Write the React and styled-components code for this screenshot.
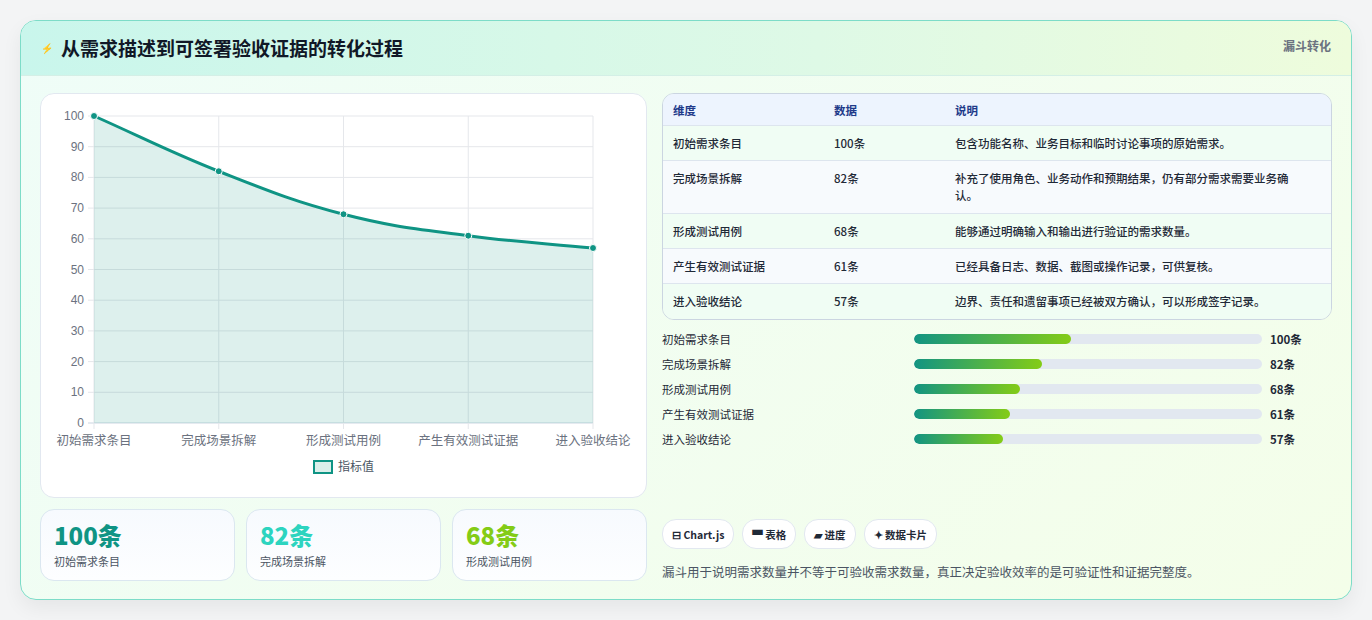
import React from 'react';
import styled, { createGlobalStyle } from 'styled-components';

const Global = createGlobalStyle`
  body {
    margin: 0;
    background: #f3f4f6;
    font-family: "Noto Sans CJK SC", "Noto Sans", sans-serif;
  }
`;

const Page = styled.div`
  padding: 20px;
  height: 620px;
  box-sizing: border-box;
  background: #f3f4f5;
`;

const Card = styled.div`
  border: 1px solid #7ddcc8;
  border-radius: 16px;
  overflow: hidden;
  background: linear-gradient(135deg, #effdf8 0%, #f4fee9 100%);
  box-shadow: 0 8px 20px rgba(0, 0, 0, 0.06);
`;

const Header = styled.div`
  height: 54px;
  display: flex;
  justify-content: space-between;
  align-items: flex-start;
  padding: 0 20px;
  background: linear-gradient(90deg, #c9f6ec 0%, #def9e6 60%, #eefcdc 100%);
  border-bottom: 1px solid #d4efe6;
`;

const Title = styled.h1`
  margin: 13px 0 0;
  font-size: 19px;
  font-weight: 700;
  color: #111827;
  display: flex;
  align-items: center;
  gap: 8px;
`;

const Bolt = styled.span`
  font-size: 10px;
  color: #3b82f6;
`;

const Tag = styled.span`
  margin-top: 16px;
  font-size: 12px;
  font-weight: 700;
  color: #6b7280;
`;

const Body = styled.div`
  display: grid;
  grid-template-columns: 607px 1fr;
  gap: 15px;
  padding: 17px 19px 18px 19px;
`;

const Column = styled.div`
  display: flex;
  flex-direction: column;
  gap: ${p => p.gap ?? 11}px;
`;

const ChartCard = styled.div`
  height: 403px;
  background: #fff;
  border: 1px solid #e2e8f0;
  border-radius: 14px;
`;

const Stats = styled.div`
  display: grid;
  grid-template-columns: repeat(3, 1fr);
  gap: 11px;
`;

const Stat = styled.div`
  height: 72px;
  box-sizing: border-box;
  padding: 10px 13px;
  border: 1px solid #dbe7f0;
  border-radius: 14px;
  background: linear-gradient(180deg, #f7fafe, #fdfeff);
`;

const StatValue = styled.div`
  font-size: 24px;
  font-weight: 800;
  line-height: 30px;
  color: ${p => p.color};
`;

const StatLabel = styled.div`
  font-size: 11px;
  color: #4b5563;
  margin-top: 3px;
`;

const Table = styled.div`
  border: 1px solid #cbd5e1;
  border-radius: 12px;
  overflow: hidden;
  font-size: 11.5px;
`;

const Row = styled.div`
  display: grid;
  grid-template-columns: 161px 121px 1fr;
  padding: ${p => p.head ? 8 : 9}px 10px 0;
  min-height: ${p => p.h}px;
  align-items: start;
  box-sizing: border-box;
  background: ${p => p.head ? '#edf4fe' : p.alt ? '#f7fafd' : '#f0fdf4'};
  border-bottom: ${p => p.last ? 'none' : '1px solid #dde5ee'};
  color: ${p => p.head ? '#1e3a8a' : '#1f2937'};
  font-weight: ${p => p.head ? 600 : 500};
  line-height: 17px;
`;

const Desc = styled.div`
  padding-right: 30px;
`;

const Bars = styled.div`
  margin-top: 10px;
  display: flex;
  flex-direction: column;
  gap: 7px;
`;

const BarRow = styled.div`
  display: grid;
  grid-template-columns: 252px 348px 1fr;
  align-items: center;
  height: 18px;
  font-size: 11.5px;
  color: #1f2937;
`;

const Track = styled.div`
  height: 10px;
  border-radius: 5px;
  background: #e2e8f0;
  overflow: hidden;
`;

const Fill = styled.div`
  height: 100%;
  border-radius: 5px;
  background: linear-gradient(90deg, #129482, #84cc16);
`;

const BarValue = styled.span`
  padding-left: 8px;
  font-weight: 700;
`;

const Spacer = styled.div`
  flex: 1;
`;

const Chips = styled.div`
  display: flex;
  gap: 8px;
`;

const Chip = styled.span`
  height: 28px;
  display: inline-flex;
  align-items: center;
  padding: 0 9px;
  border: 1px solid #e2e8f0;
  border-radius: 14px;
  background: #fff;
  font-size: 10.5px;
  font-weight: 700;
  color: #1f2937;
`;

const Note = styled.p`
  margin: 13px 0 0;
  font-size: 12.5px;
  color: #4b5563;
`;

const data = [
  { k: '初始需求条目', v: 100, d: '包含功能名称、业务目标和临时讨论事项的原始需求。', h: 35 },
  { k: '完成场景拆解', v: 82, d: '补充了使用角色、业务动作和预期结果，仍有部分需求需要业务确认。', h: 53 },
  { k: '形成测试用例', v: 68, d: '能够通过明确输入和输出进行验证的需求数量。', h: 35 },
  { k: '产生有效测试证据', v: 61, d: '已经具备日志、数据、截图或操作记录，可供复核。', h: 35 },
  { k: '进入验收结论', v: 57, d: '边界、责任和遗留事项已经被双方确认，可以形成签字记录。', h: 35 },
];

function Chart() {
  const x0 = 53, x1 = 552, y0 = 22, y1 = 329;
  const xs = data.map((_, i) => x0 + (i * (x1 - x0)) / 4);
  const ys = data.map(d => y1 - (d.v / 100) * (y1 - y0));
  let path = `M${xs[0]},${ys[0]}`;
  for (let i = 1; i < xs.length; i++) {
    const cx = (xs[i] - xs[i - 1]) * 0.4;
    const s0 = i > 1 ? (ys[i] - ys[i - 2]) / 2 : ys[1] - ys[0];
    const s1 = i < xs.length - 1 ? (ys[i + 1] - ys[i - 1]) / 2 : ys[i] - ys[i - 1];
    path += ` C${xs[i - 1] + cx},${ys[i - 1] + s0 * 0.4} ${xs[i] - cx},${ys[i] - s1 * 0.4} ${xs[i]},${ys[i]}`;
  }
  const ticks = [0, 10, 20, 30, 40, 50, 60, 70, 80, 90, 100];
  return (
    <svg width="606" height="403" style={{ display: 'block' }} fontFamily="'Liberation Sans', 'Noto Sans CJK SC', sans-serif">
      {ticks.map(t => {
        const y = y1 - (t / 100) * (y1 - y0);
        return (
          <g key={t}>
            <line x1={x0 - 6} x2={x1} y1={y} y2={y} stroke={t === 0 ? '#cbd5e1' : '#e5e7eb'} />
            <text x={x0 - 10} y={y + 4} textAnchor="end" fontSize="12" fill="#6b7280">{t}</text>
          </g>
        );
      })}
      {xs.map((x, i) => (
        <g key={i}>
          <line x1={x} x2={x} y1={y0} y2={y1 + 6} stroke="#e5e7eb" />
          <text x={x} y={y1 + 22} textAnchor="middle" fontSize="12.5" fill="#6b7280">{data[i].k}</text>
        </g>
      ))}
      <path d={`${path} L${x1},${y1} L${x0},${y1} Z`} fill="rgba(15,148,130,0.14)" />
      <path d={path} fill="none" stroke="#0f9484" strokeWidth="3" />
      {xs.map((x, i) => (
        <circle key={i} cx={x} cy={ys[i]} r="3.5" fill="#0f9484" stroke="#fff" strokeWidth="1" />
      ))}
      <rect x="273" y="367" width="18" height="12" fill="#dbefea" stroke="#0f9484" strokeWidth="2" />
      <text x="297" y="377" fontSize="12" fill="#4b5563">指标值</text>
    </svg>
  );
}

export default function App() {
  return (
    <>
      <Global />
      <Page>
        <Card>
          <Header>
            <Title><Bolt>⚡</Bolt>从需求描述到可签署验收证据的转化过程</Title>
            <Tag>漏斗转化</Tag>
          </Header>
          <Body>
            <Column>
              <ChartCard><Chart /></ChartCard>
              <Stats>
                <Stat><StatValue color="#0f9484">100条</StatValue><StatLabel>初始需求条目</StatLabel></Stat>
                <Stat><StatValue color="#2dd4bf">82条</StatValue><StatLabel>完成场景拆解</StatLabel></Stat>
                <Stat><StatValue color="#84cc16">68条</StatValue><StatLabel>形成测试用例</StatLabel></Stat>
              </Stats>
            </Column>
            <Column gap={0}>
              <Table>
                <Row head h={32}><span>维度</span><span>数据</span><span>说明</span></Row>
                {data.map((d, i) => (
                  <Row key={d.k} h={d.h} alt={i % 2 === 1} last={i === data.length - 1}>
                    <span>{d.k}</span><span>{d.v}条</span><Desc>{d.d}</Desc>
                  </Row>
                ))}
              </Table>
              <Bars>
                {data.map(d => (
                  <BarRow key={d.k}>
                    <span>{d.k}</span>
                    <Track><Fill style={{ width: `${d.v * 0.45}%` }} /></Track>
                    <BarValue>{d.v}条</BarValue>
                  </BarRow>
                ))}
              </Bars>
              <Spacer />
              <Chips>
                <Chip>⊟ Chart.js</Chip>
                <Chip>▀ 表格</Chip>
                <Chip>▰ 进度</Chip>
                <Chip>✦ 数据卡片</Chip>
              </Chips>
              <Note>漏斗用于说明需求数量并不等于可验收需求数量，真正决定验收效率的是可验证性和证据完整度。</Note>
            </Column>
          </Body>
        </Card>
      </Page>
    </>
  );
}
